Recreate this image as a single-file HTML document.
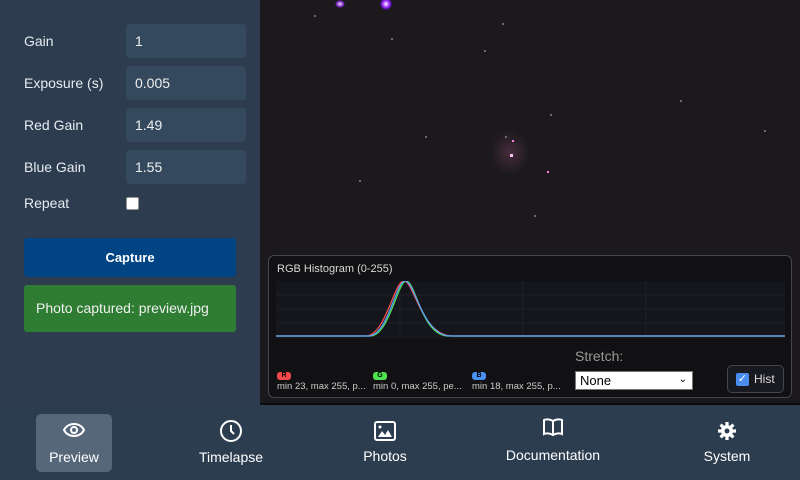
<!DOCTYPE html>
<html><head><meta charset="utf-8"><style>
*{box-sizing:border-box;margin:0;padding:0}
body{width:800px;height:480px;overflow:hidden;background:#2d3d4f;font-family:"Liberation Sans",sans-serif;position:relative;color:#e6ebf0}
#side{position:absolute;left:0;top:0;width:260px;height:405px;background:#2d3d4f}
.lbl{position:absolute;left:24px;font-size:14px;color:#e6ebf0}
.inp{position:absolute;left:126px;width:120px;height:34px;background:#34495e;border-radius:4px;font-size:14px;padding:9px 9px;color:#f0f0f0}
#img{position:absolute;left:260px;top:0;width:540px;height:405px;background:#1b191c;border-bottom:2px solid #0c0c0e}
.s{position:absolute;width:2px;height:2px;background:#6a6a78}
#nav{position:absolute;left:0;top:405px;width:800px;height:75px;background:#2d3d50}
.ni{position:absolute;top:0;text-align:center;font-size:14px;color:#fff}
.ni svg{display:block;margin:0 auto}
</style></head><body>
<div id="side">
<div class="lbl" style="top:33px">Gain</div><div class="inp" style="top:24px">1</div>
<div class="lbl" style="top:75px">Exposure (s)</div><div class="inp" style="top:66px">0.005</div>
<div class="lbl" style="top:117px">Red Gain</div><div class="inp" style="top:108px">1.49</div>
<div class="lbl" style="top:159px">Blue Gain</div><div class="inp" style="top:150px">1.55</div>
<div class="lbl" style="top:195px">Repeat</div>
<div style="position:absolute;left:126px;top:197px;width:13px;height:13px;background:#fff;border-radius:2px;border:1px solid #999"></div>
<div style="position:absolute;left:24px;top:238px;width:212px;height:39px;background:#004483;border-radius:3px;color:#fff;font-weight:bold;font-size:13px;text-align:center;line-height:39px">Capture</div>
<div style="position:absolute;left:24px;top:285px;width:212px;height:47px;background:#2e7d32;border-radius:3px;color:#f0f0f0;font-size:14px;padding:0 12px;line-height:47px">Photo captured: preview.jpg</div>
</div>
<div id="img">
<div style="position:absolute;left:75px;top:0px;width:10px;height:8px;border-radius:50%;background:radial-gradient(#f0e0ff,#7a20c0 50%,transparent 70%)"></div>
<div style="position:absolute;left:120px;top:-2px;width:12px;height:12px;border-radius:50%;background:radial-gradient(#fff,#a030ff 40%,#5010a0 60%,transparent 75%)"></div>
<div style="position:absolute;left:230px;top:130px;width:40px;height:45px;border-radius:50%;background:radial-gradient(rgba(150,80,120,.35),transparent 70%)"></div>
<div class="s" style="left:250px;top:154px;background:#f8c0f0;width:3px;height:3px"></div>
<div class="s" style="left:252px;top:140px;background:#ff80e0"></div>
<div class="s" style="left:287px;top:171px;background:#ff80e0"></div>
<div class="s" style="left:242px;top:23px"></div><div class="s" style="left:224px;top:50px"></div>
<div class="s" style="left:245px;top:136px"></div><div class="s" style="left:504px;top:130px"></div>
<div class="s" style="left:131px;top:38px"></div><div class="s" style="left:165px;top:136px"></div>
<div class="s" style="left:290px;top:114px"></div><div class="s" style="left:274px;top:215px"></div>
<div class="s" style="left:54px;top:15px"></div><div class="s" style="left:99px;top:180px"></div>
<div class="s" style="left:420px;top:100px"></div>
</div>
<div style="position:absolute;left:268px;top:255px;width:524px;height:143px;background:rgba(16,16,20,.92);border:1px solid #44464c;border-radius:6px">
<div style="position:absolute;left:8px;top:7px;font-size:11px;color:#d8d8d8">RGB Histogram (0-255)</div>
<svg style="position:absolute;left:7px;top:25px" width="509" height="58">
<rect width="509" height="58" fill="#15161b"/>
<g stroke="#1e2026" stroke-width="1"><line x1="0" y1="14" x2="509" y2="14"/><line x1="0" y1="28" x2="509" y2="28"/><line x1="0" y1="42" x2="509" y2="42"/><line x1="124" y1="0" x2="124" y2="58"/><line x1="247" y1="0" x2="247" y2="58"/><line x1="370" y1="0" x2="370" y2="58"/></g>
<path d="M0 55 L90 55 C110 54 118 0 128 0 C138 0 145 53 175 55 L509 55" fill="none" stroke="#ff5050" stroke-width="1.2"/>
<path d="M0 55 L95 55 C113 54 122 0 130 0 C140 0 145 54 172 55 L509 55" fill="none" stroke="#50e050" stroke-width="1.2"/>
<path d="M0 55 L93 55 C112 54 120 0 129 0 C139 0 146 54 174 55 L509 55" fill="none" stroke="#5aa0ff" stroke-width="1.2"/>
</svg>
<div style="position:absolute;left:8px;top:116px;width:14px;height:8px;background:#f04848;border-radius:3px;font-size:7px;color:#000;text-align:center;line-height:8px;font-weight:bold">R</div>
<div style="position:absolute;left:104px;top:116px;width:14px;height:8px;background:#50e050;border-radius:3px;font-size:7px;color:#000;text-align:center;line-height:8px;font-weight:bold">G</div>
<div style="position:absolute;left:203px;top:116px;width:14px;height:8px;background:#4a90f0;border-radius:3px;font-size:7px;color:#000;text-align:center;line-height:8px;font-weight:bold">B</div>
<div style="position:absolute;left:8px;top:125px;font-size:9.5px;color:#ccc">min 23, max 255, p...</div>
<div style="position:absolute;left:104px;top:125px;font-size:9.5px;color:#ccc">min 0, max 255, pe...</div>
<div style="position:absolute;left:203px;top:125px;font-size:9.5px;color:#ccc">min 18, max 255, p...</div>
<div style="position:absolute;left:306px;top:92px;font-size:14px;color:#999">Stretch:</div>
<div style="position:absolute;left:306px;top:115px;width:118px;height:19px;background:#fff;border:1px solid #777;font-size:13px;color:#000;padding:1px 4px;line-height:16px">None<span style="position:absolute;right:5px;top:0;font-size:10px">&#x2304;</span></div>
<div style="position:absolute;left:458px;top:109px;width:57px;height:28px;border:1px solid #44464c;border-radius:5px;background:#181a1f;font-size:12px;color:#ddd;line-height:26px;padding-left:26px">Hist
<div style="position:absolute;left:8px;top:7px;width:13px;height:13px;background:#4a8cf0;border-radius:2px;color:#fff;font-size:11px;line-height:13px;text-align:center">✓</div></div>
</div>
<div id="nav">
<div style="position:absolute;left:36px;top:9px;width:76px;height:58px;background:#56677a;border-radius:5px"></div>
<div class="ni" style="left:36px;width:76px;top:15px"><svg width="24" height="20" viewBox="0 0 24 20"><path d="M2 10 C6 2 18 2 22 10 C18 18 6 18 2 10Z" fill="none" stroke="#fff" stroke-width="2"/><circle cx="12" cy="10" r="3" fill="none" stroke="#fff" stroke-width="2"/></svg><div style="margin-top:9px">Preview</div></div>
<div class="ni" style="left:190px;width:82px;top:14px"><svg width="24" height="24" viewBox="0 0 24 24"><circle cx="12" cy="12" r="10" fill="none" stroke="#fff" stroke-width="2"/><path d="M12 6v6l3 3" fill="none" stroke="#fff" stroke-width="2"/></svg><div style="margin-top:6px">Timelapse</div></div>
<div class="ni" style="left:345px;width:80px;top:16px"><svg width="22" height="20" viewBox="0 0 22 20"><rect x="1" y="1" width="20" height="18" rx="2" fill="none" stroke="#fff" stroke-width="2"/><path d="M4 16 L8 10 L11 14 L14 9 L18 16Z" fill="#fff"/><circle cx="6" cy="6" r="1.5" fill="#fff"/></svg><div style="margin-top:7px">Photos</div></div>
<div class="ni" style="left:495px;width:116px;top:12px"><svg width="22" height="20" viewBox="0 0 22 20"><path d="M11 4 C8 2 4 2 2 3 V17 C4 16 8 16 11 18 C14 16 18 16 20 17 V3 C18 2 14 2 11 4Z M11 4 V18" fill="none" stroke="#fff" stroke-width="2"/></svg><div style="margin-top:10px">Documentation</div></div>
<div class="ni" style="left:690px;width:74px;top:15px"><svg width="22" height="22" viewBox="0 0 22 22"><g stroke="#fff" stroke-width="3.2"><line x1="11" y1="2" x2="11" y2="20"/><line x1="2" y1="11" x2="20" y2="11"/><line x1="4.6" y1="4.6" x2="17.4" y2="17.4"/><line x1="17.4" y1="4.6" x2="4.6" y2="17.4"/></g><circle cx="11" cy="11" r="6" fill="#fff"/><circle cx="11" cy="11" r="2.5" fill="#2d3d50"/></svg><div style="margin-top:6px">System</div></div>
</div>
</body></html>
